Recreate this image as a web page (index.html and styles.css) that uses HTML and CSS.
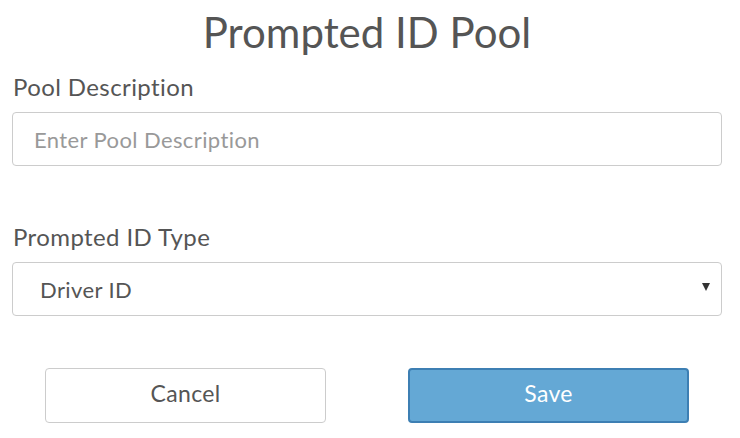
FILE: index.html
```html
<!DOCTYPE html>
<html lang="en">
<head>
    <meta charset="UTF-8">
    <meta name="viewport" content="width=device-width, initial-scale=1.0">
    <title>Prompted ID Pool</title>
    <link rel="stylesheet" href="styles.css">
</head>
<body>
    <div class="container">
        <h1 class="title">Prompted ID Pool</h1>
        <form id="poolForm">
            <div class="field">
                <label for="poolDescription">Pool Description</label>
                <input type="text" id="poolDescription" name="poolDescription" placeholder="Enter Pool Description">
            </div>
            <div class="field">
                <label for="idType">Prompted ID Type</label>
                <div class="select-wrap">
                    <select id="idType" name="idType">
                        <option value="driver">Driver ID</option>
                        <option value="vehicle">Vehicle ID</option>
                    </select>
                </div>
            </div>
            <div class="actions">
                <button type="button" class="btn btn-cancel">Cancel</button>
                <button type="submit" class="btn btn-save">Save</button>
            </div>
        </form>
    </div>
</body>
</html>
```

FILE: styles.css
```css
body, html {
    margin: 0;
    padding: 0;
    background: #fff;
    font-family: Lato, "Open Sans", sans-serif;
    color: #555;
}

.container {
    width: 710px;
    padding: 0 12px;
}

.title {
    margin: 0;
    padding-top: 7px;
    text-align: center;
    font-size: 42px;
    font-weight: 400;
    line-height: 50px;
    color: #555;
}

.field {
    display: flex;
    flex-direction: column;
}

.field + .field {
    margin-top: 41px;
}

label {
    font-size: 24px;
    line-height: 30px;
    letter-spacing: 0.4px;
    margin: 15px 0 10px;
    padding-left: 1px;
    color: #555;
}

input, select {
    box-sizing: border-box;
    width: 100%;
    height: 54px;
    border: 1px solid #ccc;
    border-radius: 4px;
    font-family: inherit;
    font-size: 22px;
    letter-spacing: 0.4px;
    background: #fff;
}

input {
    padding: 0 21px;
    color: #555;
}

input::placeholder {
    color: #999;
}

.select-wrap {
    position: relative;
}

select {
    appearance: none;
    padding: 0 27px;
    color: #555;
}

.select-wrap::after {
    content: "";
    position: absolute;
    right: 12px;
    top: 21px;
    border-left: 4px solid transparent;
    border-right: 4px solid transparent;
    border-top: 8px solid #333;
}

.actions {
    display: grid;
    grid-template-columns: 1fr 1fr;
    gap: 82px;
    padding: 0 33px;
    margin-top: 52px;
}

.btn {
    height: 55px;
    padding: 0 0 5px;
    border-radius: 4px;
    font-family: inherit;
    font-size: 23px;
    letter-spacing: 0.3px;
}

.btn-cancel {
    background: #fff;
    border: 1px solid #ccc;
    color: #555;
}

.btn-save {
    background: #64a8d5;
    border: 2px solid #3d7fb3;
    color: #fff;
}
```
